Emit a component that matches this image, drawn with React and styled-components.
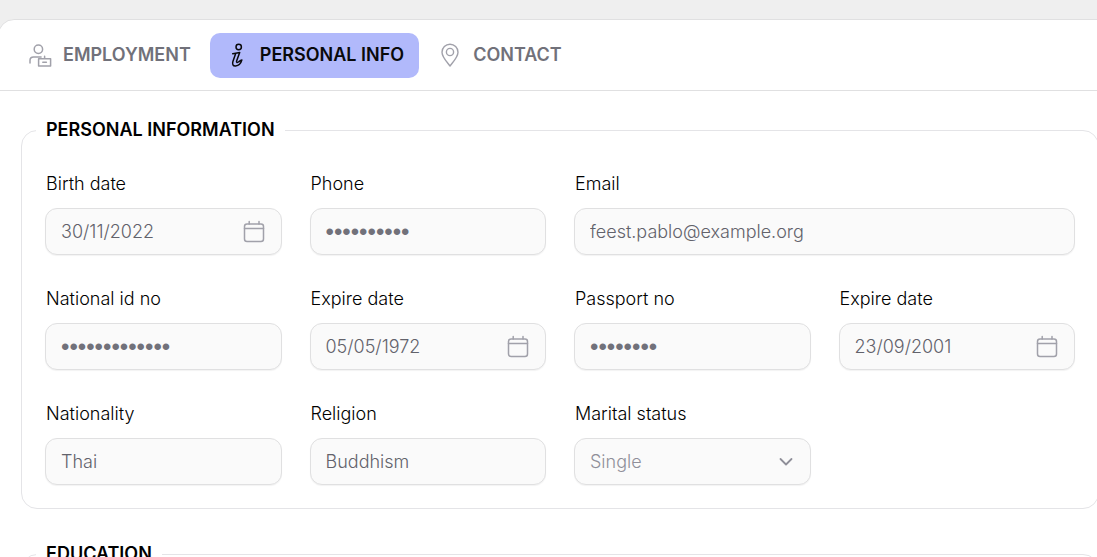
import styled, { createGlobalStyle } from "styled-components";

const GlobalStyle = createGlobalStyle`
  *, *::before, *::after {
    box-sizing: border-box;
  }

  body {
    margin: 0;
    background: #efefef;
    color: #000;
    font-family: Inter, "Liberation Sans", sans-serif;
    font-size: 18px;
    font-weight: 300;
    line-height: 24px;
    overflow: hidden;
  }
`;

/* the panel is wider than the window and runs off both sides */
const Panel = styled.main`
  margin: 19px -25px 0 -2px;
  background: #fff;
  border: 1px solid #e0e0e1;
  border-radius: 16px;
`;

const TabBar = styled.nav`
  display: flex;
  gap: 4px;
  padding: 13px 14px 12px;
  border-bottom: 1px solid #e0e0e1;
`;

const Tab = styled.button`
  display: flex;
  align-items: center;
  gap: 11px;
  height: 45px;
  padding: 0 15px 2px;
  border: none;
  border-radius: 10px;
  background: ${(props) => (props.$active ? "#b1b9fb" : "transparent")};
  color: ${(props) => (props.$active ? "#09090b" : "#71717a")};
  font: inherit;
  font-weight: 600;
  cursor: pointer;

  svg {
    color: ${(props) => (props.$active ? "#09090b" : "#a1a1aa")};
  }
`;

const Sections = styled.form`
  display: flex;
  flex-direction: column;
  gap: 33px;
  padding: 27px 22px;
`;

const Section = styled.fieldset`
  min-width: 0;
  margin: 0;
  padding: 30px 14px 23px;
  border: 1px solid #e4e4e7;
  border-radius: 16px;
`;

const Legend = styled.legend`
  padding: 0 10px;
  font-weight: 600;
`;

const Grid = styled.div`
  display: grid;
  grid-template-columns: repeat(4, minmax(0, 1fr));
  gap: 32px 28px;
  padding: 0 9px;
`;

const Field = styled.div`
  display: flex;
  flex-direction: column;
  gap: 12px;
  grid-column: span ${(props) => props.$span || 1};
`;

const Label = styled.label`
  padding-left: 1px;
`;

const Control = styled.div`
  display: flex;
  align-items: center;
  height: 47px;
  border: 1px solid #e0e0e1;
  border-radius: 12px;
  background: #fafafa;
  box-shadow: 0 1px 1px rgba(0, 0, 0, 0.05);
`;

const Input = styled.input`
  flex: 1;
  min-width: 0;
  height: 100%;
  padding: 0 15px;
  border: none;
  outline: none;
  background: transparent;
  color: #62626b;
  font: inherit;

  &[type="password"] {
    color: #71717a;
    font-family: "Liberation Sans", sans-serif;
    font-size: 24px;
  }
`;

const PickerButton = styled.button`
  display: flex;
  padding: 0 15px 0 0;
  border: none;
  background: transparent;
  color: #a1a1aa;
  cursor: pointer;
`;

const SelectBox = styled(Control)`
  position: relative;

  svg {
    position: absolute;
    right: 16px;
    pointer-events: none;
    color: #8f8f99;
  }
`;

const Select = styled.select`
  flex: 1;
  height: 100%;
  padding: 0 15px;
  border: none;
  outline: none;
  appearance: none;
  background: transparent;
  color: #8f8f99;
  font: inherit;
`;

function Icon({ size = 24, stroke = 1.5, children }) {
  return (
    <svg
      width={size}
      height={size}
      viewBox={`0 0 ${size} ${size}`}
      fill="none"
      stroke="currentColor"
      strokeWidth={stroke}
      strokeLinecap="round"
      strokeLinejoin="round"
      aria-hidden="true"
    >
      {children}
    </svg>
  );
}

const EmploymentIcon = () => (
  <Icon>
    <circle cx="10.4" cy="6.3" r="4.2" />
    <path d="M2 20v-2.6c0-2.2 1.6-3.4 3.6-3.4h7.5" />
    <path d="M10.6 15.7h12v7.3h-12zM16.6 13.2v2.4M14.8 19.3h3.6" />
  </Icon>
);

const InfoIcon = () => (
  <Icon>
    <circle cx="13.7" cy="4" r="2.7" />
    <path d="M7.7 10.7c2.3-.2 4.7-.7 7-1.2l-3.1 8.5c-.4 1.4.5 1.9 1.7 1 1.2-.8 2-1.8 3.6-2.1-.9 3.3-3.2 5.8-6.3 6-2.7.2-3.5-1.8-2.7-4.3l2.7-7.9" />
  </Icon>
);

const PinIcon = () => (
  <Icon stroke={1.4}>
    <path d="M12 23C9 19 4 14 4 9.200a8 8 0 0 1 16 0c0 4.800-5 9.800-8 13.800z" />
    <circle cx="12" cy="9" r="3.600" />
  </Icon>
);

const CalendarIcon = () => (
  <Icon>
    <rect x="2.5" y="4" width="19" height="17.5" rx="2.5" />
    <path d="M2.5 8.500h19M7.200 1.600V4M17 1.600V4" />
  </Icon>
);

const ChevronIcon = () => (
  <Icon size={16} stroke={1.8}>
    <path d="M2.500 5 8 10.500 13.500 5" />
  </Icon>
);

const tabs = [
  { label: "EMPLOYMENT", icon: EmploymentIcon },
  { label: "PERSONAL INFO", icon: InfoIcon, active: true },
  { label: "CONTACT", icon: PinIcon },
];

const fields = [
  { id: "birth", label: "Birth date", type: "date", value: "30/11/2022" },
  { id: "phone", label: "Phone", type: "password", value: "0812345678" },
  { id: "email", label: "Email", type: "email", value: "feest.pablo@example.org", span: 2 },
  { id: "national", label: "National id no", type: "password", value: "1234567890123" },
  { id: "national-exp", label: "Expire date", type: "date", value: "05/05/1972" },
  { id: "passport", label: "Passport no", type: "password", value: "12345678" },
  { id: "passport-exp", label: "Expire date", type: "date", value: "23/09/2001" },
  { id: "nationality", label: "Nationality", type: "text", value: "Thai" },
  { id: "religion", label: "Religion", type: "text", value: "Buddhism" },
  { id: "marital", label: "Marital status", type: "select", value: "Single" },
];

function FormField({ id, label, type, value, span }) {
  return (
    <Field $span={span}>
      <Label htmlFor={id}>{label}</Label>
      {type === "select" ? (
        <SelectBox>
          <Select id={id} defaultValue={value}>
            <option>{value}</option>
          </Select>
          <ChevronIcon />
        </SelectBox>
      ) : (
        <Control>
          <Input
            id={id}
            type={type === "date" ? "text" : type}
            defaultValue={value}
            autoComplete="off"
          />
          {type === "date" && (
            <PickerButton type="button" aria-label={`Pick ${label}`}>
              <CalendarIcon />
            </PickerButton>
          )}
        </Control>
      )}
    </Field>
  );
}

export default function App() {
  return (
    <>
      <GlobalStyle />
      <Panel>
        <TabBar>
          {tabs.map(({ label, icon: TabIcon, active }) => (
            <Tab key={label} type="button" $active={active}>
              <TabIcon />
              {label}
            </Tab>
          ))}
        </TabBar>
        <Sections>
          <Section>
            <Legend>PERSONAL INFORMATION</Legend>
            <Grid>
              {fields.map((field) => (
                <FormField key={field.id} {...field} />
              ))}
            </Grid>
          </Section>
          <Section>
            <Legend>EDUCATION</Legend>
          </Section>
        </Sections>
      </Panel>
    </>
  );
}
